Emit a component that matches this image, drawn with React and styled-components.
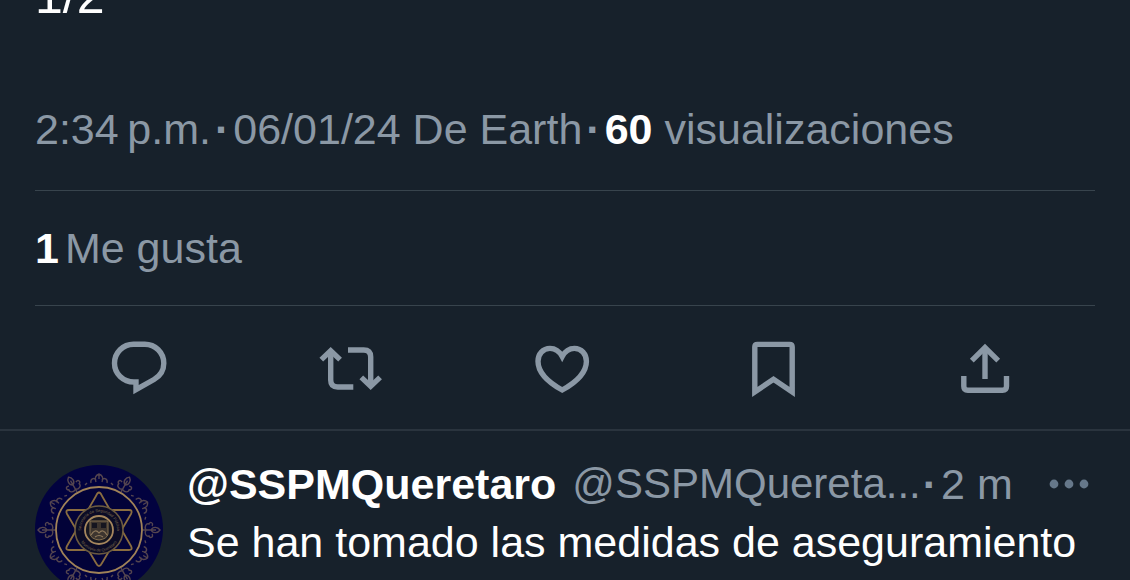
import React from "react";
import styled, { createGlobalStyle, ThemeProvider } from "styled-components";

const theme = {
  background: "#17212b",
  text: "#ffffff",
  muted: "#8b98a5",
  dots: "#66788a",
  divider: "#38444d",
  separator: "#2a343e",
  gold: "#a08258",
  navy: "#02023f",
};

const ACTIONS = [
  {
    label: "Responder",
    paths: [
      "M30.5 12.2H41.8A19 19 0 0 1 60.8 31.2C60.8 38 57 44 51 47.5L33 57.6V50H31C20 50 11.5 41.5 11.5 31.2A19 19 0 0 1 30.5 12.2Z",
    ],
  },
  {
    label: "Repostear",
    paths: [
      "M7.3 27.6L16.7 18.8L26.1 27.6",
      "M16.7 19V48Q16.7 55 23.7 55H39.3",
      "M34 18H49.7Q56.7 18 56.7 25V54",
      "M47.3 45.4L56.7 54.2L66.1 45.4",
    ],
  },
  {
    label: "Me gusta",
    paths: [
      "M36.2 24.5C33.2 19 28.6 16.4 24 16.4C17 16.4 12 22 12 29.2C12 39 20.5 49.3 36.2 58C51.9 49.3 60.4 39 60.4 29.2C60.4 22 55.4 16.4 48.4 16.4C43.8 16.4 39.2 19 36.2 24.5Z",
    ],
  },
  {
    label: "Guardar",
    paths: [
      "M19.4 12.4H51.6Q54.2 12.4 54.2 15V60L35.5 47.2L16.8 60V15Q16.8 12.4 19.4 12.4Z",
    ],
  },
  {
    label: "Compartir",
    paths: [
      "M22.8 28.6L36 15.6L49.2 28.6",
      "M36 16V47",
      "M14.8 44V54.2Q14.8 58.2 18.8 58.2H53.5Q57.5 58.2 57.5 54.2V44",
    ],
  },
];

const LEAVES = [30, 90, 150, 210, 270, 330];
const SCROLLS = [0, 60, 120, 180, 240, 300];

const ActionIcon = ({ paths }) => (
  <svg width="72" height="72" viewBox="0 0 72 72" aria-hidden="true">
    {paths.map((d) => (
      <path key={d} d={d} fill="none" stroke="currentColor" strokeWidth="5.4" />
    ))}
  </svg>
);

const Badge = () => (
  <svg width="128" height="128" viewBox="0 0 128 128" aria-hidden="true">
    <defs>
      <path id="ring-top" d="M46 65A18 18 0 0 1 82 65" />
      <path id="ring-bottom" d="M42.5 65A21.5 21.5 0 0 0 85.5 65" />
    </defs>
    <circle cx="64" cy="64" r="64" fill={theme.navy} />
    <g fill="none" stroke="#54454f" strokeWidth="1.4">
      {LEAVES.map((angle) => (
        <path
          key={angle}
          transform={`rotate(${angle} 64 65)`}
          d="M64 21V8M64 18C61 20 57 18 58 15C55 14 57 10 60 12M64 18C67 20 71 18 70 15C73 14 71 10 68 12M64 13C60 11 61 6 64 4C67 6 68 11 64 13"
        />
      ))}
      {SCROLLS.map((angle) => (
        <path
          key={angle}
          transform={`rotate(${angle} 64 65)`}
          d="M56 18C55 14 59 12 61 15M72 18C73 14 69 12 67 15M61 17C59 13 61 10 64 9C67 10 69 13 67 17M64 9V14M50 20L52 18M78 20L76 18"
        />
      ))}
    </g>
    <circle cx="64" cy="65" r="43" fill="#020238" stroke={theme.gold} strokeWidth="1.8" />
    <g fill="none" stroke="#8a6d40" strokeWidth="1.8" strokeLinejoin="round">
      <path d="M61 31Q64 24 67 31L96 81Q98 85 94 85H34Q30 85 32 81Z" />
      <path d="M61 98Q64 104 67 98L96 49Q98 45 94 45H34Q30 45 32 49Z" />
    </g>
    <circle cx="64" cy="65" r="24" fill="#0b0b25" stroke="#6b5a40" strokeWidth="1.6" />
    <RingText>
      <textPath href="#ring-top" startOffset="50%" textAnchor="middle">
        Secretaría de Seguridad Pública
      </textPath>
    </RingText>
    <RingText>
      <textPath href="#ring-bottom" startOffset="50%" textAnchor="middle">
        Municipio de Querétaro
      </textPath>
    </RingText>
    <circle cx="64" cy="65" r="14" fill="#171720" stroke="#a6875e" strokeWidth="1.8" />
    <path
      d="M55 56H73V69Q72 74 64 75Q56 74 55 69Z"
      fill="#3d352f"
      stroke="#86704f"
      strokeWidth="1"
    />
    <path
      d="M57 58H62V63H57ZM66 58H71V63H66Z"
      fill="#15151f"
    />
    <path
      d="M56 70Q60 63 64 68Q68 63 72 70M60 72Q64 69 68 72"
      fill="none"
      stroke="#8f7a5c"
      strokeWidth="1.2"
    />
  </svg>
);

export const App = () => {
  return (
    <ThemeProvider theme={theme}>
      <GlobalCss />
      <Page>
        <Post>
          <PostText>1/2</PostText>
          <Meta>
            <span>2:34{"\u202f"}p.m.</span>
            <Dot>·</Dot>
            <span>06/01/24 De Earth</span>
            <Dot>·</Dot>
            <span>
              <strong>60</strong> visualizaciones
            </span>
          </Meta>
          <Likes>
            <strong>1</strong>
            <span>Me gusta</span>
          </Likes>
        </Post>
        <Actions>
          {ACTIONS.map((action) => (
            <ActionButton key={action.label} type="button" aria-label={action.label}>
              <ActionIcon paths={action.paths} />
            </ActionButton>
          ))}
        </Actions>
        <Reply>
          <Avatar href="#perfil" aria-label="@SSPMQueretaro">
            <Badge />
          </Avatar>
          <ReplyBody>
            <ReplyHeader>
              <Name href="#perfil">@SSPMQueretaro</Name>
              <Handle>@SSPMQuereta...</Handle>
              <Time>
                <Dot>·</Dot>
                <span>2 m</span>
              </Time>
              <MoreButton type="button" aria-label="Más opciones">
                <svg width="46" height="10" viewBox="0 0 46 10" aria-hidden="true">
                  <circle cx="5" cy="5" r="4.4" fill="currentColor" />
                  <circle cx="20" cy="5" r="4.4" fill="currentColor" />
                  <circle cx="35" cy="5" r="4.4" fill="currentColor" />
                </svg>
              </MoreButton>
            </ReplyHeader>
            <ReplyText>Se han tomado las medidas de aseguramiento</ReplyText>
          </ReplyBody>
        </Reply>
      </Page>
    </ThemeProvider>
  );
};

export default App;

const GlobalCss = createGlobalStyle`
  * {
    box-sizing: border-box;
  }

  body {
    margin: 0;
    background: ${theme.background};
  }

  button {
    border: 0;
    padding: 0;
    background: none;
    cursor: pointer;
  }

  svg {
    display: block;
  }
`;

const Page = styled.main`
  height: 100vh;
  overflow: hidden;
  font-family: "Liberation Sans", Arial, sans-serif;
  font-size: 43px;
  line-height: 58px;
  white-space: nowrap;
  color: ${(props) => props.theme.text};
`;

const Post = styled.article`
  padding: 0 35px;
`;

const PostText = styled.p`
  margin: -33px 0 0;
  font-size: 50px;
`;

const Line = styled.div`
  display: flex;
  color: ${(props) => props.theme.muted};
  border-bottom: 1px solid ${(props) => props.theme.divider};

  strong {
    color: ${(props) => props.theme.text};
  }
`;

const Meta = styled(Line)`
  gap: 4px;
  padding: 75px 0 32px;
`;

const Likes = styled(Line)`
  gap: 6px;
  padding: 28px 0;
`;

const Dot = styled.span`
  font-weight: 700;
`;

const Actions = styled.div`
  display: grid;
  grid-template-columns: repeat(5, 1fr);
  padding: 26px 39px 25px 33px;
  border-bottom: 2px solid ${(props) => props.theme.separator};
`;

const ActionButton = styled.button`
  display: flex;
  justify-content: center;
  color: ${(props) => props.theme.muted};
`;

const Reply = styled.article`
  display: flex;
  gap: 24px;
  padding: 24px 35px 0;
`;

const Avatar = styled.a`
  flex: none;
  margin-top: 10px;
`;

const RingText = styled.text`
  fill: #7d6a4c;
  font-family: "Liberation Sans", Arial, sans-serif;
  font-size: 4px;
`;

const ReplyBody = styled.div`
  flex: 1;
  min-width: 0;
`;

const ReplyHeader = styled.div`
  display: flex;
  align-items: center;
  color: ${(props) => props.theme.muted};
`;

const Name = styled.a`
  font-weight: 700;
  color: ${(props) => props.theme.text};
  text-decoration: none;
`;

const Handle = styled.span`
  margin-left: 16px;
  font-size: 42px;
`;

const Time = styled.span`
  display: flex;
  gap: 4px;
  margin-left: 2px;
`;

const MoreButton = styled.button`
  margin-left: auto;
  color: ${(props) => props.theme.dots};
`;

const ReplyText = styled.p`
  margin: 0;
`;
